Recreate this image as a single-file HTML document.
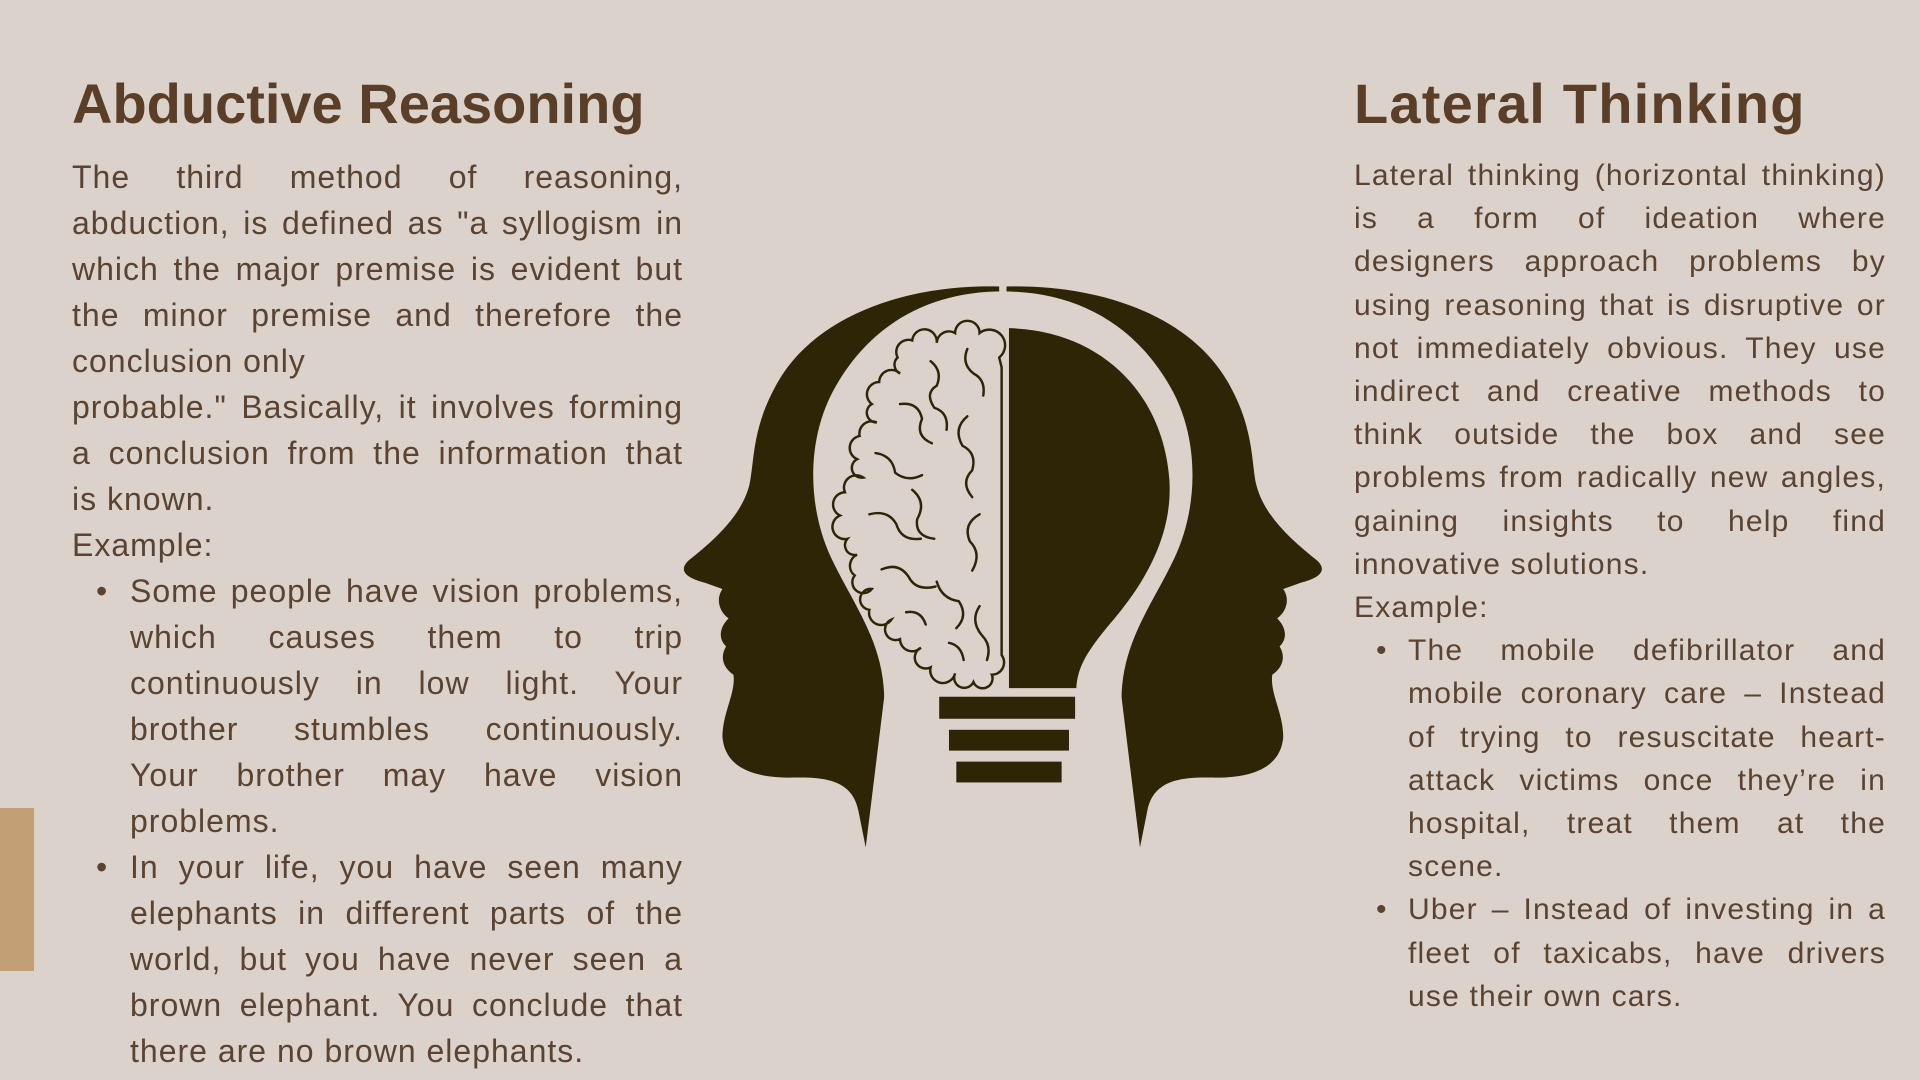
<!DOCTYPE html>
<html><head><meta charset="utf-8">
<style>
html,body{margin:0;padding:0}
body{width:1920px;height:1080px;background:#dcd2cc;position:relative;overflow:hidden;font-family:"Liberation Sans",sans-serif;color:#5a4331}
.t{position:absolute;top:76px;font-size:56px;line-height:56px;font-weight:bold;color:#5b3e28;white-space:nowrap}
.c{position:absolute;top:154px}
.L{left:72px;width:611px;font-size:32px;line-height:46px;letter-spacing:1px}
.R{left:1354px;width:532px;font-size:30px;line-height:43.2px;letter-spacing:1.2px}
.c div{text-align:left;white-space:normal}
.c div.j{text-align:justify;text-align-last:justify}
.L .b{margin-left:58px;position:relative}
.R .b{margin-left:54px;position:relative}
.b .d{position:absolute;left:-34px;top:0}
.R .b .d{left:-32px}
.bar{position:absolute;left:0;top:808px;width:34px;height:163px;background:#c39f76}
svg{position:absolute;left:0;top:0}
</style></head><body>
<div class="bar"></div>
<div class="t" style="left:72px">Abductive Reasoning</div>
<div class="t" style="left:1354px;letter-spacing:1.2px">Lateral Thinking</div>

<div class="c L">
<div class="j">The third method of reasoning,</div>
<div class="j">abduction, is defined as "a syllogism in</div>
<div class="j">which the major premise is evident but</div>
<div class="j">the minor premise and therefore the</div>
<div>conclusion only</div>
<div class="j">probable." Basically, it involves forming</div>
<div class="j">a conclusion from the information that</div>
<div>is known.</div>
<div>Example:</div>
<div class="b j"><span class="d">•</span>Some people have vision problems,</div>
<div class="b j">which causes them to trip</div>
<div class="b j">continuously in low light. Your</div>
<div class="b j">brother stumbles continuously.</div>
<div class="b j">Your brother may have vision</div>
<div class="b">problems.</div>
<div class="b j"><span class="d">•</span>In your life, you have seen many</div>
<div class="b j">elephants in different parts of the</div>
<div class="b j">world, but you have never seen a</div>
<div class="b j">brown elephant. You conclude that</div>
<div class="b">there are no brown elephants.</div>
</div>

<div class="c R">
<div class="j">Lateral thinking (horizontal thinking)</div>
<div class="j">is a form of ideation where</div>
<div class="j">designers approach problems by</div>
<div class="j">using reasoning that is disruptive or</div>
<div class="j">not immediately obvious. They use</div>
<div class="j">indirect and creative methods to</div>
<div class="j">think outside the box and see</div>
<div class="j">problems from radically new angles,</div>
<div class="j">gaining insights to help find</div>
<div>innovative solutions.</div>
<div>Example:</div>
<div class="b j"><span class="d">•</span>The mobile defibrillator and</div>
<div class="b j">mobile coronary care – Instead</div>
<div class="b j">of trying to resuscitate heart-</div>
<div class="b j">attack victims once they’re in</div>
<div class="b j">hospital, treat them at the</div>
<div class="b">scene.</div>
<div class="b j"><span class="d">•</span>Uber – Instead of investing in a</div>
<div class="b j">fleet of taxicabs, have drivers</div>
<div class="b">use their own cars.</div>
</div>

<svg width="1920" height="1080" viewBox="0 0 1568 882">
<g fill="#2e2406">
 <path id="hd" d="M816 234 C740 232 662 258 632 318 C614 352 616 378 612 396 C606 420 585 440 562 458 C554 466 560 472 576 476 L590 481 C584 490 588 500 595 505 C588 512 586 521 593 528 C588 536 590 545 599 551 C601 566 590 582 590 602 C592 625 612 636 650 635 C682 634 697 642 701 662 L707 692 L722 570 L816 570 Z"/>
 <use href="#hd" transform="translate(1638,0) scale(-1,1)"/>
</g>
<path fill="#dcd2cc" d="M722 700 L722 566 C720 522 696 492 679 456 C660 416 658 362 680 320 C710 264 760 238 819 238 C878 238 928 264 958 320 C980 362 978 416 959 456 C942 492 918 522 916 566 L916 700 Z"/>
<g fill="#2e2406">
 <path d="M824 268 C900 270 950 322 955 392 C958 440 932 480 906 510 C886 534 880 546 879 562 L824 562 Z"/>
 <rect x="767" y="569" width="111" height="18"/>
 <rect x="775" y="596" width="98" height="17"/>
 <rect x="781" y="622" width="86" height="17"/>
</g>
<g fill="#dcd2cc" stroke="#2e2406" stroke-width="2" stroke-linecap="round">
 <path d="M816 292 A10 10 0 0 0 800 272 A10 10 0 0 0 780 272 A10 10 0 0 0 765 280 A10 10 0 0 0 745 278 A10 10 0 0 0 733 292 A8 8 0 0 0 735 305 A10 10 0 0 0 718 312 A10 10 0 0 0 712 330 A8 8 0 0 0 716 345 A10 10 0 0 0 702 356 A10 10 0 0 0 700 375 A8 8 0 0 0 705 390 A10 10 0 0 0 690 402 A10 10 0 0 0 686 421 A10 10 0 0 0 692 440 A8 8 0 0 0 700 453 A10 10 0 0 0 698 470 A8 8 0 0 0 712 481 A8 8 0 0 0 710 498 A10 10 0 0 0 728 506 A8 8 0 0 0 735 522 A10 10 0 0 0 752 529 A8 8 0 0 0 760 545 A10 10 0 0 0 780 550 A8 8 0 0 0 795 557 A8 8 0 0 0 810 551 A10 10 0 0 0 818 535 L818 300 Z"/>
 <g fill="none">
 <path d="M790 285 q-5 12 5 20 q10 5 8 18"/>
 <path d="M760 295 q10 8 5 20 q-10 6 -2 18 q12 4 10 18"/>
 <path d="M735 330 q15 -2 18 12 q-6 14 8 20"/>
 <path d="M715 370 q14 2 16 16 q10 8 22 2"/>
 <path d="M790 340 q-12 10 -4 24 q12 6 8 20 q-10 10 0 22"/>
 <path d="M710 420 q15 -4 22 8 q4 14 20 12"/>
 <path d="M745 400 q12 10 4 24 q-2 14 14 16"/>
 <path d="M800 420 q-14 8 -8 22 q10 10 2 24"/>
 <path d="M720 465 q14 -6 22 6 q6 12 22 8"/>
 <path d="M765 475 q4 14 18 16 q8 12 -2 22"/>
 <path d="M740 500 q12 -2 16 10"/>
 <path d="M800 495 q-8 12 2 24 q8 8 4 20"/>
 <path d="M775 525 q10 2 12 14"/>
 </g>
</g>
</svg>
</body></html>
